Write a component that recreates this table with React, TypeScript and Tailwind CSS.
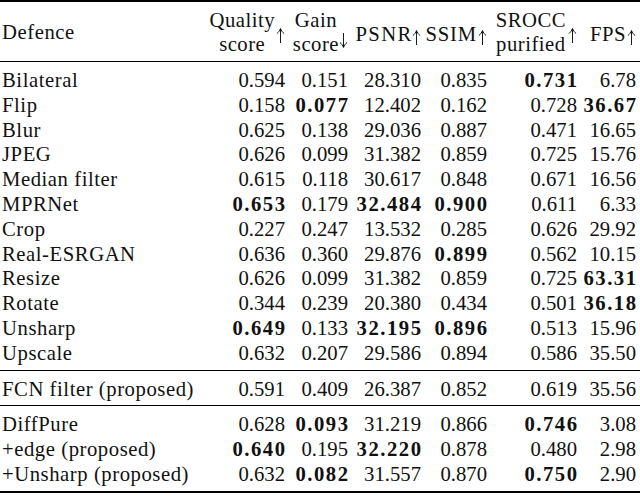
import React from "react";

type Cell = string | { b: string };

const rowsA: Cell[][] = [
  ["Bilateral", "0.594", "0.151", "28.310", "0.835", { b: "0.731" }, "6.78"],
  ["Flip", "0.158", { b: "0.077" }, "12.402", "0.162", "0.728", { b: "36.67" }],
  ["Blur", "0.625", "0.138", "29.036", "0.887", "0.471", "16.65"],
  ["JPEG", "0.626", "0.099", "31.382", "0.859", "0.725", "15.76"],
  ["Median filter", "0.615", "0.118", "30.617", "0.848", "0.671", "16.56"],
  ["MPRNet", { b: "0.653" }, "0.179", { b: "32.484" }, { b: "0.900" }, "0.611", "6.33"],
  ["Crop", "0.227", "0.247", "13.532", "0.285", "0.626", "29.92"],
  ["Real-ESRGAN", "0.636", "0.360", "29.876", { b: "0.899" }, "0.562", "10.15"],
  ["Resize", "0.626", "0.099", "31.382", "0.859", "0.725", { b: "63.31" }],
  ["Rotate", "0.344", "0.239", "20.380", "0.434", "0.501", { b: "36.18" }],
  ["Unsharp", { b: "0.649" }, "0.133", { b: "32.195" }, { b: "0.896" }, "0.513", "15.96"],
  ["Upscale", "0.632", "0.207", "29.586", "0.894", "0.586", "35.50"],
];

const rowsB: Cell[][] = [
  ["FCN filter (proposed)", "0.591", "0.409", "26.387", "0.852", "0.619", "35.56"],
];

const rowsC: Cell[][] = [
  ["DiffPure", "0.628", { b: "0.093" }, "31.219", "0.866", { b: "0.746" }, "3.08"],
  ["+edge (proposed)", { b: "0.640" }, "0.195", { b: "32.220" }, "0.878", "0.480", "2.98"],
  ["+Unsharp (proposed)", "0.632", { b: "0.082" }, "31.557", "0.870", { b: "0.750" }, "2.90"],
];

const GRID = "grid grid-cols-[218px_65px_63px_73px_66px_90px_59px] pl-[2px]";

function Arrow({ down }: { down?: boolean }) {
  return (
    <svg
      width="9"
      height="15"
      viewBox="0 0 9 15"
      className={down ? "shrink-0 mt-[16px] rotate-180" : "shrink-0 mt-[6px]"}
    >
      <path d="M4.5 15 V1" stroke="#000" strokeWidth="0.9" fill="none" />
      <path
        d="M0.9 5.6 C2.6 4.1 3.8 2.6 4.5 0.5 C5.2 2.6 6.4 4.1 8.1 5.6"
        stroke="#000"
        strokeWidth="0.9"
        fill="none"
      />
    </svg>
  );
}

function Row({ cells }: { cells: Cell[] }) {
  return (
    <div className={`${GRID} h-[24.8px] leading-[24.8px]`}>
      {cells.map((c, i) => {
        if (i === 0) {
          return (
            <div key={i} className="tracking-[0.55px] whitespace-nowrap">
              {c as string}
            </div>
          );
        }
        if (typeof c === "string") {
          return (
            <div key={i} className="text-right whitespace-nowrap">
              {c}
            </div>
          );
        }
        return (
          <div key={i} className="text-right whitespace-nowrap">
            <span className="font-bold tracking-[1.5px] mr-[-1.5px]">{c.b}</span>
          </div>
        );
      })}
    </div>
  );
}

function Group({ rows }: { rows: Cell[][] }) {
  return (
    <div className="pt-[6px] pb-[4px]">
      {rows.map((r, i) => (
        <Row key={i} cells={r} />
      ))}
    </div>
  );
}

function Stack({ a, b }: { a: string; b: string }) {
  return (
    <div className="flex flex-col items-center leading-[24.8px] tracking-[0.5px]">
      <span>{a}</span>
      <span>{b}</span>
    </div>
  );
}

export default function App() {
  return (
    <div className="w-[640px] h-[496px] bg-white overflow-hidden text-[#111] font-['Liberation_Serif',serif] text-[20.7px]">
      <div className="h-[2px] bg-black" />
      <div className={`${GRID} mt-[5.5px] h-[49.6px] mb-[4px]`}>
        <div className="flex items-center pt-[1px] tracking-[0.55px] leading-[24.8px]">Defence</div>
        <div className="flex items-center justify-end gap-[1px]">
          <Stack a="Quality" b="score" />
          <Arrow />
        </div>
        <div className="flex items-center justify-end gap-[0px]">
          <Stack a="Gain" b="score" />
          <Arrow down />
        </div>
        <div className="flex items-center justify-end pt-[5px] leading-[24.8px]">
          <span className="tracking-[1.3px] mr-[-0.5px]">PSNR</span>
          <Arrow />
        </div>
        <div className="flex items-center justify-end gap-[1px] pt-[5px] leading-[24.8px] tracking-[0.8px]">
          <span>SSIM</span>
          <Arrow />
        </div>
        <div className="flex items-center justify-end gap-[2px]">
          <Stack a="SROCC" b="purified" />
          <Arrow />
        </div>
        <div className="flex items-center justify-end gap-[1px] pt-[5px] leading-[24.8px] tracking-[0.5px]">
          <span>FPS</span>
          <Arrow />
        </div>
      </div>
      <div className="h-[1px] bg-black" />
      <Group rows={rowsA} />
      <div className="h-[1px] bg-black" />
      <Group rows={rowsB} />
      <div className="h-[1px] bg-black" />
      <Group rows={rowsC} />
      <div className="h-[2px] bg-black" />
    </div>
  );
}
